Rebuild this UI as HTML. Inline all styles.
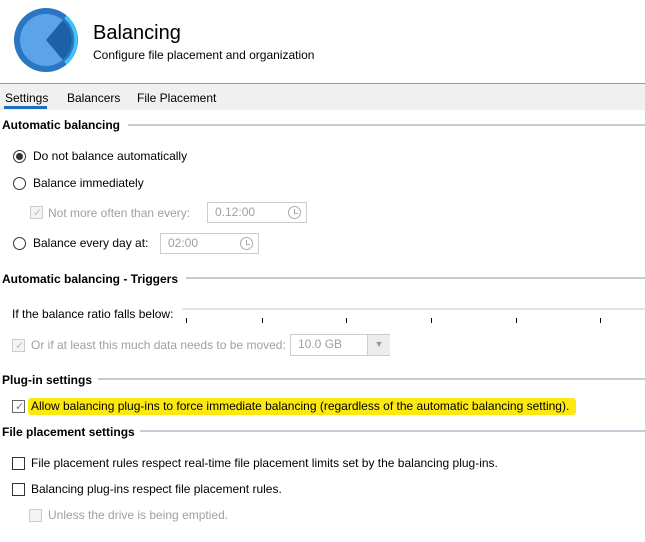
<!DOCTYPE html>
<html><head><style>
*{margin:0;padding:0;box-sizing:border-box}
body{width:645px;height:542px;background:#fff;font-family:"Liberation Sans",sans-serif;font-size:12px;color:#000;position:relative;overflow:hidden}
.a{position:absolute;white-space:nowrap}
.h{font-weight:bold;font-size:12px}
.ln{position:absolute;height:2px;background:#c5ccd6;right:0}
.rad{position:absolute;width:13px;height:13px;border:1px solid #333;border-radius:50%;background:#fff}
.rad.on::after{content:"";position:absolute;left:2px;top:2px;width:7px;height:7px;border-radius:50%;background:#333}
.cb{position:absolute;width:13px;height:13px;border:1px solid #333;background:#fff}
.cb.dis{border-color:#ccc;background:#f4f4f4}
.chk{position:absolute;left:2px;top:-1px;font-size:11px;color:#777}
.dis .chk{color:#bbb}
.g{color:#a0a0a0}
.box{position:absolute;border:1px solid #ccc;background:#fff;color:#a0a0a0;padding-left:7px;line-height:18px}
.clk{position:absolute;width:13px;height:13px;border:1px solid #aaa;border-radius:50%;top:3px}
.clk::after{content:"";position:absolute;left:5px;top:2px;width:3px;height:4px;border-left:1px solid #aaa;border-bottom:1px solid #aaa}
.tick{position:absolute;top:318px;width:1px;height:5px;background:#000}
</style></head><body>
<svg class="a" style="left:0;top:0" width="90" height="80">
<circle cx="46" cy="40" r="32" fill="#2b76c2"/>
<circle cx="46" cy="40" r="26" fill="#5ba4ea"/>
<path d="M46 40 L62.7 20.1 A26 26 0 0 1 62.7 59.9 Z" fill="#1f61a6"/>
<path d="M65.3 17 A30 30 0 0 1 65.3 63" fill="none" stroke="#3ec4f6" stroke-width="3.5"/>
</svg>
<div class="a" style="left:93px;top:22px;font-size:20px">Balancing</div>
<div class="a" style="left:93px;top:48px;font-size:12px">Configure file placement and organization</div>
<div class="a" style="left:0;top:83px;width:645px;height:27px;background:#f0f0f0;border-top:1px solid #999"></div>
<div class="a" style="left:5px;top:91px">Settings</div>
<div class="a" style="left:4px;top:106px;width:43px;height:3px;background:#1e6fbf"></div>
<div class="a" style="left:67px;top:91px">Balancers</div>
<div class="a" style="left:137px;top:91px">File Placement</div>

<div class="a h" style="left:2px;top:118px">Automatic balancing</div><div class="ln" style="left:128px;top:124px"></div>
<div class="rad on" style="left:13px;top:150px"></div><div class="a" style="left:33px;top:149px">Do not balance automatically</div>
<div class="rad" style="left:13px;top:177px"></div><div class="a" style="left:33px;top:176px">Balance immediately</div>
<div class="cb dis" style="left:30px;top:206px"><span class="chk">✓</span></div><div class="a g" style="left:48px;top:206px">Not more often than every:</div>
<div class="box" style="left:207px;top:202px;width:100px;height:21px">0.12:00<span class="clk" style="left:80px"></span></div>
<div class="rad" style="left:13px;top:237px"></div><div class="a" style="left:33px;top:236px">Balance every day at:</div>
<div class="box" style="left:160px;top:233px;width:99px;height:21px">02:00<span class="clk" style="left:79px"></span></div>

<div class="a h" style="left:2px;top:272px">Automatic balancing - Triggers</div><div class="ln" style="left:186px;top:277px"></div>
<div class="a" style="left:12px;top:307px">If the balance ratio falls below:</div>
<div class="a" style="left:182px;top:308px;width:463px;height:2px;background:#e4e4e4"></div>
<div class="tick" style="left:186px"></div><div class="tick" style="left:262px"></div><div class="tick" style="left:346px"></div><div class="tick" style="left:431px"></div><div class="tick" style="left:516px"></div><div class="tick" style="left:600px"></div>
<div class="cb dis" style="left:12px;top:339px"><span class="chk">✓</span></div><div class="a g" style="left:31px;top:338px">Or if at least this much data needs to be moved:</div>
<div class="box" style="left:290px;top:334px;width:100px;height:22px">10.0 GB<span style="position:absolute;left:76px;top:0;width:23px;height:20px;background:#ececec;border-left:1px solid #ccc;color:#999;font-size:9px;text-align:center">▼</span></div>

<div class="a h" style="left:2px;top:373px">Plug-in settings</div><div class="ln" style="left:98px;top:378px"></div>
<div class="a" style="left:28px;top:398px;width:548px;height:17px;background:#fde910;border-radius:3px"></div>
<div class="cb" style="left:12px;top:400px;border-color:#666"><span class="chk">✓</span></div><div class="a" style="left:31px;top:399px">Allow balancing plug-ins to force immediate balancing (regardless of the automatic balancing setting).</div>

<div class="a h" style="left:2px;top:425px">File placement settings</div><div class="ln" style="left:140px;top:430px"></div>
<div class="cb" style="left:12px;top:457px"></div><div class="a" style="left:31px;top:456px">File placement rules respect real-time file placement limits set by the balancing plug-ins.</div>
<div class="cb" style="left:12px;top:483px"></div><div class="a" style="left:31px;top:482px">Balancing plug-ins respect file placement rules.</div>
<div class="cb dis" style="left:29px;top:509px"></div><div class="a g" style="left:48px;top:508px">Unless the drive is being emptied.</div>
</body></html>
